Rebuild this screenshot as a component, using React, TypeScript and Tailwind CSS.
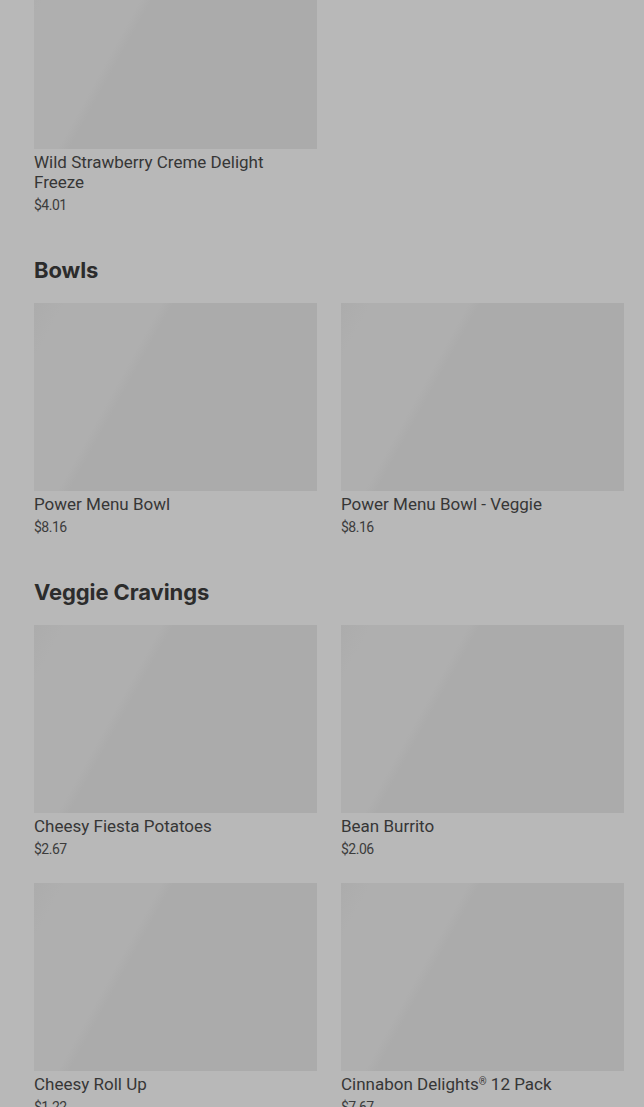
type Item = { name: string; price: string };

type Section = { title?: string; items: Item[] };

const sections: Section[] = [
  { items: [{ name: "Wild Strawberry Creme Delight Freeze", price: "$4.01" }] },
  {
    title: "Bowls",
    items: [
      { name: "Power Menu Bowl", price: "$8.16" },
      { name: "Power Menu Bowl - Veggie", price: "$8.16" },
    ],
  },
  {
    title: "Veggie Cravings",
    items: [
      { name: "Cheesy Fiesta Potatoes", price: "$2.67" },
      { name: "Bean Burrito", price: "$2.06" },
      { name: "Cheesy Roll Up", price: "$1.22" },
      { name: "Cinnabon Delights® 12 Pack", price: "$7.67" },
    ],
  },
];

// render ® as a small raised mark like the menu does
function ItemName({ name }: { name: string }) {
  const parts = name.split("®");
  if (parts.length === 1) return <>{name}</>;
  return (
    <>
      {parts[0]}
      <span className="text-[10px] align-[5px] leading-none">®</span>
      {parts[1]}
    </>
  );
}

function MenuCard({ item }: { item: Item }) {
  return (
    <div className="flex flex-col">
      {/* skeleton image, still loading */}
      <div className="h-[188px] w-full bg-[linear-gradient(119deg,#acacac_0%,#afafaf_8%,#afafaf_33%,#ababab_36%,#ababab_100%)]" />
      <div className="mt-[3px] text-[17px] leading-[20px] text-[#363636] font-['Roboto',sans-serif] pr-4">
        <ItemName name={item.name} />
      </div>
      <div className="mt-[4px] text-[14px] leading-[18px] text-[#3c3c3c] font-['Roboto',sans-serif] tracking-[-0.5px]">
        {item.price}
      </div>
    </div>
  );
}

export default function App() {
  return (
    <div className="min-h-[1107px] w-full overflow-hidden bg-[#b8b8b8]">
      <main className="pl-[34px] pr-[20px] -mt-[39px] flex flex-col">
        {sections.map((section, i) => (
          <section key={i} className={i > 0 ? "mt-[42px]" : ""}>
            {section.title && (
              <h2 className="mb-[19px] text-[22px] leading-[28px] font-bold text-[#2c2c2c] tracking-[-0.1px] font-['Inter',sans-serif]">
                {section.title}
              </h2>
            )}
            <div className="grid grid-cols-2 gap-x-[24px] gap-y-[25px]">
              {section.items.map((item) => (
                <MenuCard key={item.name} item={item} />
              ))}
            </div>
          </section>
        ))}
      </main>
    </div>
  );
}
